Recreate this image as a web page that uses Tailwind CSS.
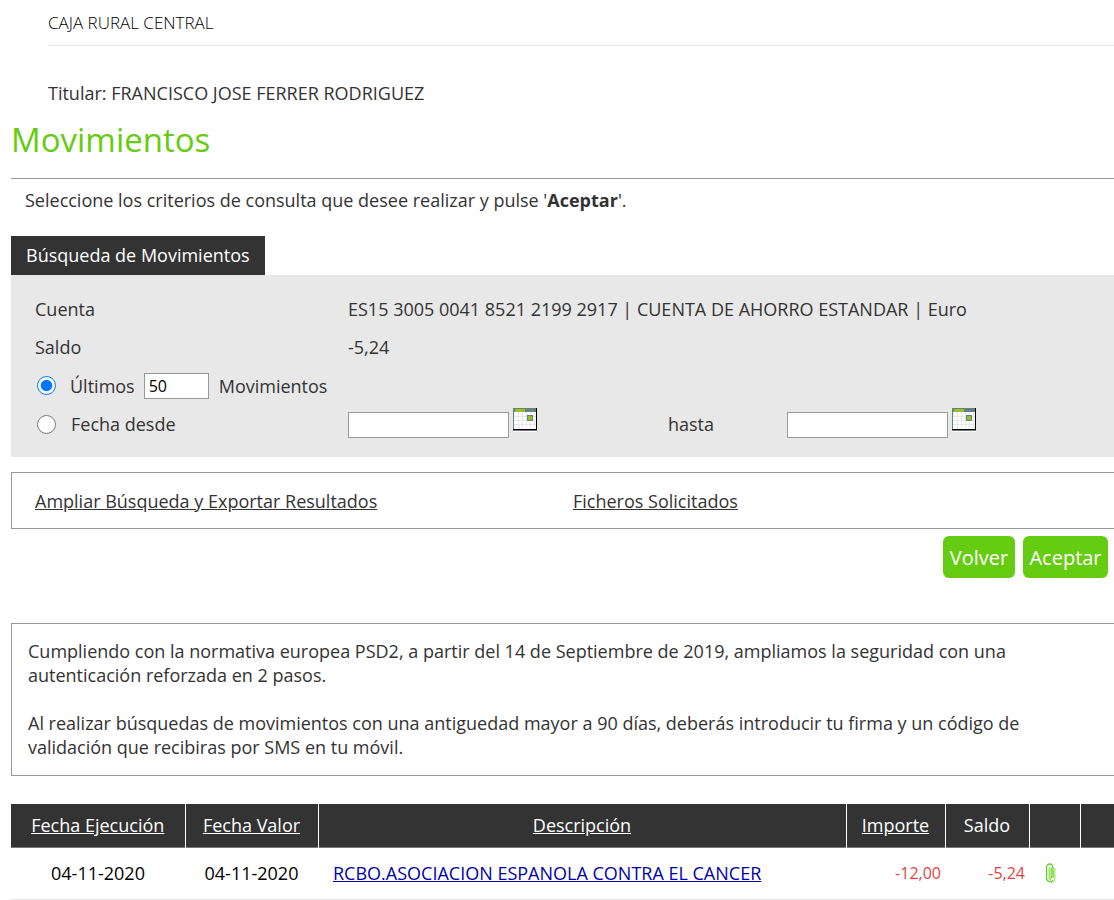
<!DOCTYPE html>
<html lang="es">
<head>
<meta charset="utf-8">
<title>Movimientos</title>
<script src="https://cdn.jsdelivr.net/npm/@tailwindcss/browser@4"></script>
</head>
<body class="bg-white font-['Open_Sans',sans-serif] text-[18px] leading-6 font-normal text-[#333] overflow-x-hidden">
<header class="ml-12 border-b border-[#e7e7e7] pt-[11px] pb-[10px] text-[17px] font-light text-black">CAJA RURAL CENTRAL</header>
<main class="pl-[11px]">
  <p class="ml-[37px] mt-[35px]">Titular: FRANCISCO JOSE FERRER RODRIGUEZ</p>
  <h1 class="mt-[9px] pb-3 text-[33px] leading-[52px] text-[#66cc11] border-b border-[#999]">Movimientos</h1>
  <p class="ml-[14px] mt-[9px]">Seleccione los criterios de consulta que desee realizar y pulse '<b class="font-bold">Aceptar</b>'.</p>

  <form>
    <h2 class="mt-6 inline-block bg-[#333] px-[15px] py-[7px] h-[39px] align-top text-white">Búsqueda de Movimientos</h2>
    <div class="bg-[#e8e8e8] pl-6 pt-[15px] pb-[14px]">
      <div class="grid grid-cols-[313px_minmax(0,1fr)] h-[38px] items-center">
        <span>Cuenta</span><span>ES15 3005 0041 8521 2199 2917 | CUENTA DE AHORRO ESTANDAR | Euro</span>
      </div>
      <div class="grid grid-cols-[313px_minmax(0,1fr)] h-[38px] items-center">
        <span>Saldo</span><span>-5,24</span>
      </div>
      <div class="flex h-[39px] items-center">
        <input type="radio" id="ultimos" name="criterio" checked class="ml-[2px] mr-[14px] size-[19px]">
        <label for="ultimos">Últimos</label>
        <input type="text" value="50" aria-label="Número de movimientos" class="ml-[9px] mr-[10px] h-[26px] w-[65px] border border-[#999] bg-white px-1 text-base text-black">
        <span>Movimientos</span>
      </div>
      <div class="grid grid-cols-[313px_320px_119px_minmax(0,1fr)] h-[38px] items-center">
        <div class="flex items-center">
          <input type="radio" id="fecha" name="criterio" class="ml-[2px] mr-[15px] size-[19px]">
          <label for="fecha">Fecha desde</label>
        </div>
        <div class="flex items-start gap-1 pb-0.5">
          <input type="text" aria-label="Fecha desde" class="mt-1 h-[26px] w-[161px] border border-[#999] bg-white px-1 text-base">
          <button type="button" aria-label="Abrir calendario desde">
            <svg class="block" width="24" height="24" viewBox="0 0 24 24" shape-rendering="crispEdges"><path fill="#fff" d="M0 0h24v24H0z"/><path stroke="#e3e8e8" stroke-width="1" fill="none" d="M5.500 4v17M9.500 4v17M13.500 4v17M17.500 4v17M21.500 4v17M1 8.500h22M1 12.500h22M1 16.500h22"/><path fill="#678080" d="M0 0h23v4H0zM0 0h1v21H0zM14 7h6v6h-6z"/><path fill="#97c11f" d="M2 1h10v3H2zM15 8h4v4h-4z"/><path fill="#000" d="M23 0h1v22h-1zM0 21h24v1H0z"/><path fill="#777" d="M0 22h24v1H0z"/></svg>
          </button>
        </div>
        <span>hasta</span>
        <div class="flex items-start gap-1 pb-0.5">
          <input type="text" aria-label="Fecha hasta" class="mt-1 h-[26px] w-[161px] border border-[#999] bg-white px-1 text-base">
          <button type="button" aria-label="Abrir calendario hasta">
            <svg class="block" width="24" height="24" viewBox="0 0 24 24" shape-rendering="crispEdges"><path fill="#fff" d="M0 0h24v24H0z"/><path stroke="#e3e8e8" stroke-width="1" fill="none" d="M5.500 4v17M9.500 4v17M13.500 4v17M17.500 4v17M21.500 4v17M1 8.500h22M1 12.500h22M1 16.500h22"/><path fill="#678080" d="M0 0h23v4H0zM0 0h1v21H0zM14 7h6v6h-6z"/><path fill="#97c11f" d="M2 1h10v3H2zM15 8h4v4h-4z"/><path fill="#000" d="M23 0h1v22h-1zM0 21h24v1H0z"/><path fill="#777" d="M0 22h24v1H0z"/></svg>
          </button>
        </div>
      </div>
    </div>

    <nav class="mt-[15px] flex h-[57px] items-center border border-r-0 border-[#999] pl-[23px]">
      <a href="#" class="w-[538px] underline">Ampliar Búsqueda y Exportar Resultados</a>
      <a href="#" class="underline">Ficheros Solicitados</a>
    </nav>
    <div class="mt-[7px] mr-[6px] flex justify-end gap-2 text-xl leading-6 text-white">
      <button type="button" class="h-[42px] w-[72px] rounded-md bg-[#66cc11] pt-0.5">Volver</button>
      <button type="submit" class="h-[42px] w-[85px] rounded-md bg-[#66cc11] pt-0.5">Aceptar</button>
    </div>
  </form>

  <section class="mt-[45px] border border-r-0 border-[#999] pl-4 pr-[60px] pt-[15px] pb-4">
    <p>Cumpliendo con la normativa europea PSD2, a partir del 14 de Septiembre de 2019, ampliamos la seguridad con una autenticación reforzada en 2 pasos.</p>
    <p class="mt-6">Al realizar búsquedas de movimientos con una antiguedad mayor a 90 días, deberás introducir tu firma y un código de validación que recibiras por SMS en tu móvil.</p>
  </section>

  <table class="mt-7 w-full table-fixed border-collapse">
    <colgroup><col class="w-[174px]"><col class="w-[133px]"><col><col class="w-[99px]"><col class="w-[84px]"><col class="w-[51px]"><col class="w-[34px]"></colgroup>
    <thead>
      <tr class="h-[43px] bg-[#333] text-white border-b border-[#777]">
        <th class="border-r border-white font-normal"><a href="#" class="underline">Fecha Ejecución</a></th>
        <th class="border-r border-white font-normal"><a href="#" class="underline">Fecha Valor</a></th>
        <th class="border-r border-white font-normal"><a href="#" class="underline">Descripción</a></th>
        <th class="border-r border-white font-normal"><a href="#" class="underline">Importe</a></th>
        <th class="border-r border-white font-normal">Saldo</th>
        <th class="border-r border-white"></th>
        <th></th>
      </tr>
    </thead>
    <tbody>
      <tr class="h-[52px] border-b border-[#e7e7e7] text-black">
        <td class="text-center">04-11-2020</td>
        <td class="text-center">04-11-2020</td>
        <td class="pl-[15px]"><a href="#" class="text-[#0000aa] underline">RCBO.ASOCIACION ESPANOLA CONTRA EL CANCER</a></td>
        <td class="pr-1 text-right text-base text-[#e63f3f]">-12,00</td>
        <td class="pr-1 text-right text-base text-[#e63f3f]">-5,24</td>
        <td class="pl-4"><button type="button" aria-label="Documento adjunto" class="block"><svg width="11" height="21" viewBox="0 0 11 21" fill="none"><path stroke="#b8ee90" stroke-width="2" d="M5 4v12"/><path stroke="#66cc22" stroke-width="1.300" d="M8 15V4a3.200 3 0 0 0-6.400 0v12a3.500 3.500 0 0 0 6.400 1"/><path stroke="#8fdc5c" d="M4 5v10.500a1.300 1.500 0 0 0 2.500 0V4.500"/><path stroke="#a5e878" stroke-width="1.300" d="M9.800 5v11c0 2-1.500 3.500-4 3.800"/></svg></button></td>
        <td></td>
      </tr>
    </tbody>
  </table>
</main>
</body>
</html>
